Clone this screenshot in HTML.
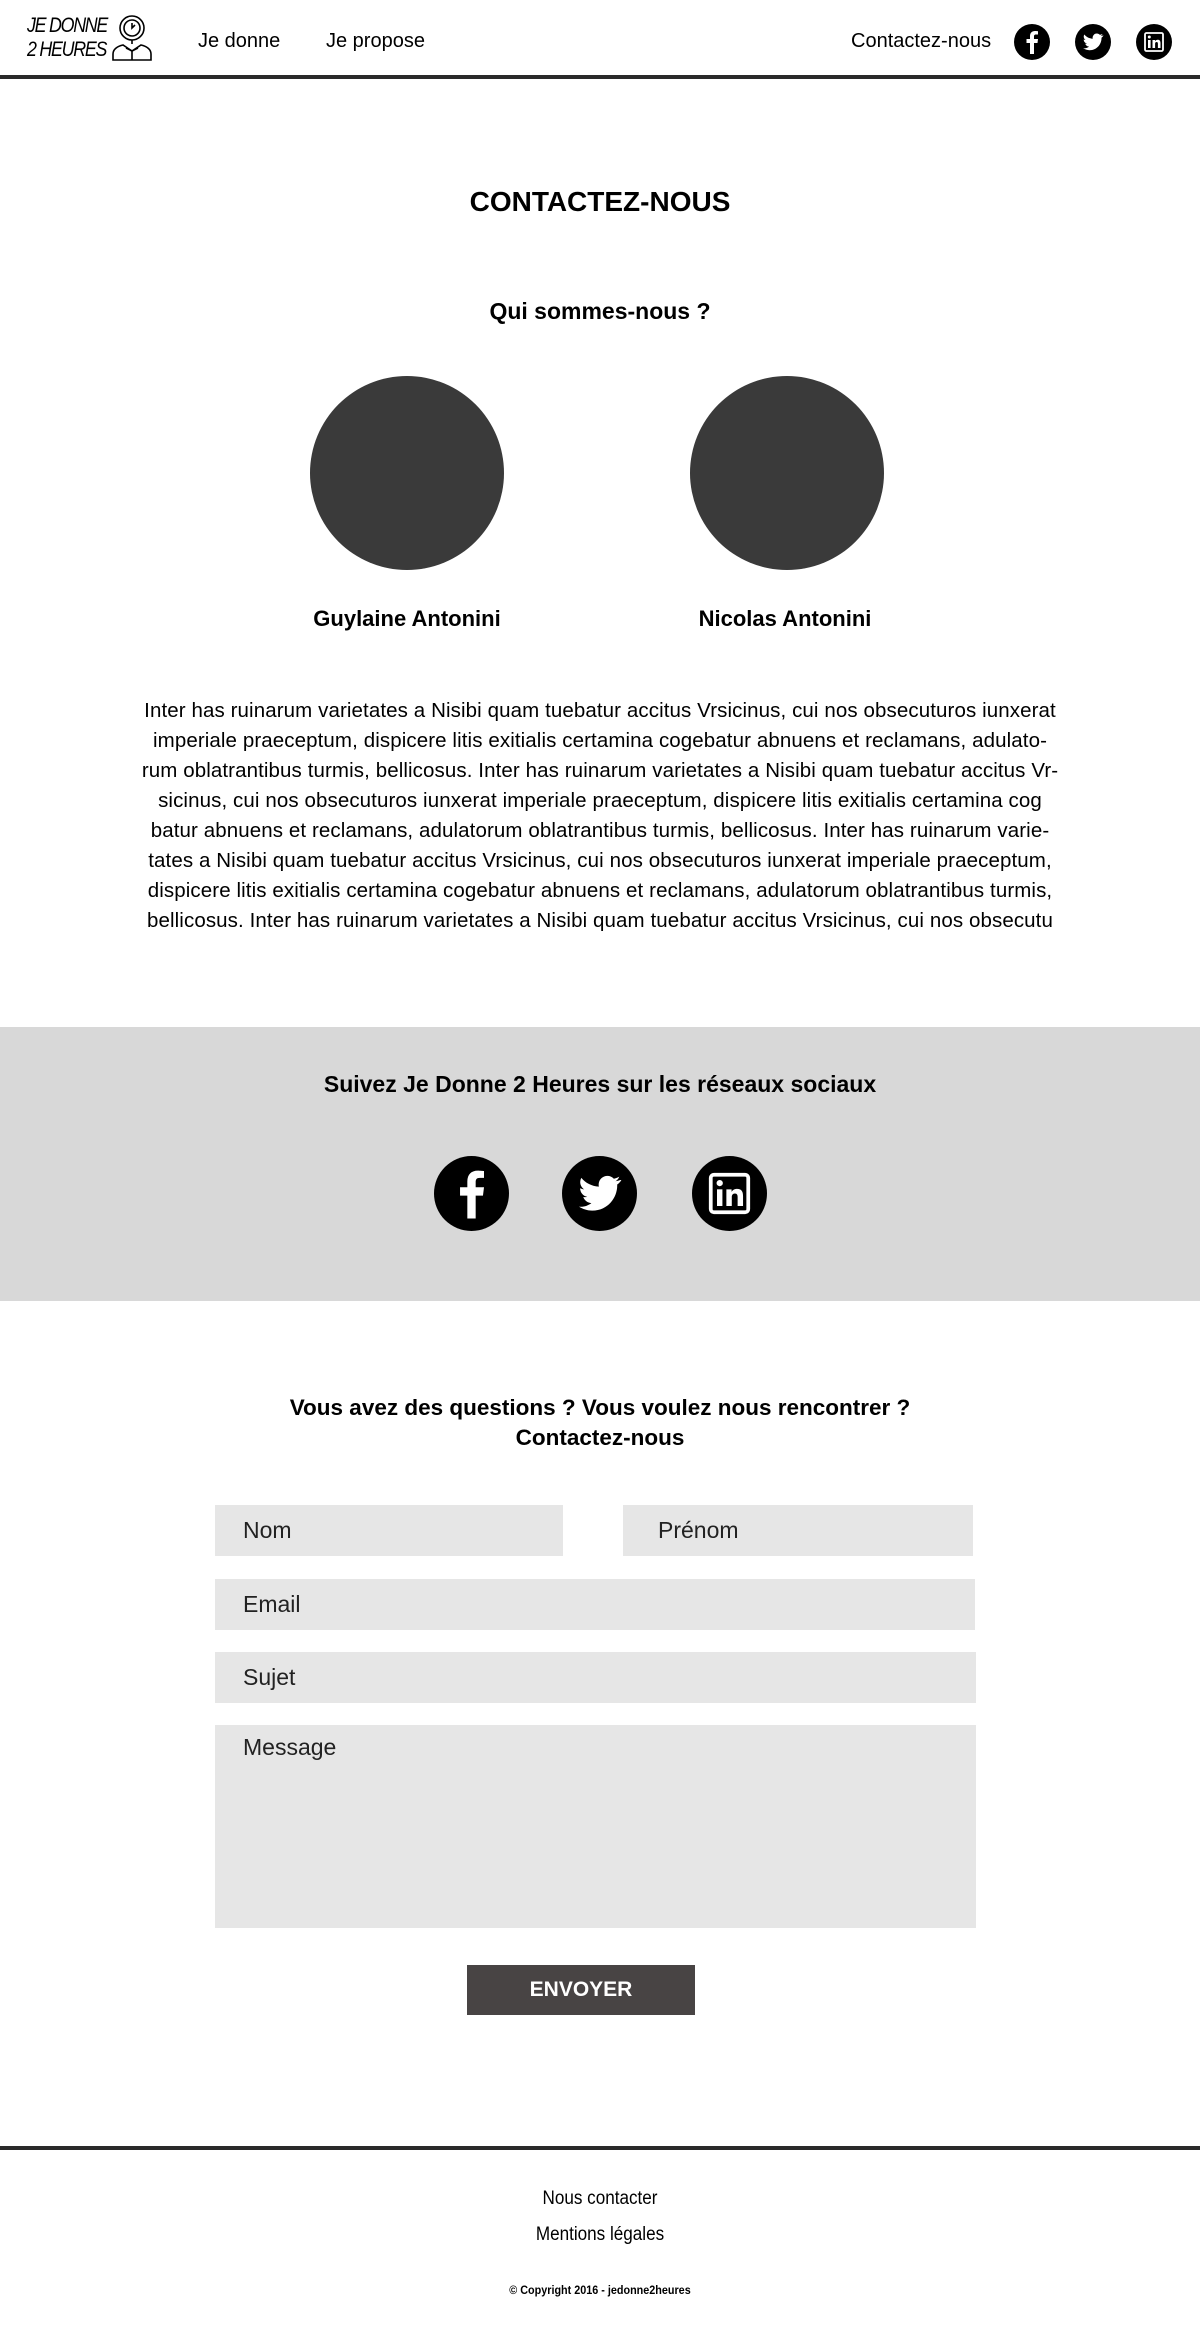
<!DOCTYPE html>
<html><head><meta charset="utf-8"><style>
*{margin:0;padding:0;box-sizing:border-box}
body{width:1200px;height:2336px;position:relative;background:#fff;font-family:"Liberation Sans",sans-serif;color:#000;overflow:hidden}
.a{position:absolute}
.c{position:absolute;left:0;width:1200px;text-align:center}
.nav{font-size:20px;top:30px}
.circ{position:absolute;width:194px;height:194px;border-radius:50%;background:#3a3a3a;top:376px}
.inp{position:absolute;background:#e6e6e6;font-size:23px;color:#222;padding-left:28px;line-height:51px}
.p{font-size:20.5px;letter-spacing:0.1px;line-height:30px}
</style></head><body>
<div class="a" style="left:27px;top:14px;font-size:21px;line-height:24px;font-style:italic;letter-spacing:-1.5px;transform:scaleX(0.85);transform-origin:left">JE DONNE<br>2 HEURES</div>
<svg class="a" style="left:110px;top:14px" width="44" height="48" viewBox="0 0 44 48" fill="none" stroke="#000" stroke-width="1.6">
<circle cx="22" cy="14" r="12"/><circle cx="22" cy="14" r="8"/><path d="M22 9v5l3-3"/><path d="M22 26v4"/>
<path d="M3 46v-6c0-5 5-8 10-9l9 6 9-6c5 1 10 4 10 9v6z"/><path d="M22 37v9M16 34l6 3 6-3"/></svg>
<div class="a nav" style="left:198px">Je donne</div>
<div class="a nav" style="left:326px">Je propose</div>
<div class="a nav" style="left:851px">Contactez-nous</div>
<svg class="a" style="left:1014px;top:24px" width="36" height="36" viewBox="0 0 36 36"><circle cx="18" cy="18" r="18"/><path d="M20 30V19h3.5l.5-4h-4v-2.5c0-1.2.4-2 2-2h2V7.2c-.4 0-1.6-.2-3-.2-3 0-5 1.8-5 5.2V15h-3.5v4H16v11z" fill="#fff"/></svg>
<svg class="a" style="left:1075px;top:24px" width="36" height="36" viewBox="0 0 36 36"><circle cx="18" cy="18" r="18"/><path d="M28 11.5c-.7.3-1.5.5-2.3.6.8-.5 1.5-1.3 1.8-2.2-.8.5-1.7.8-2.6 1-1.6-1.7-4.3-1.8-6-.2-1.1 1-1.5 2.6-1.2 4C14.3 14.5 11.3 13 9.3 10.5c-1.1 1.9-.5 4.3 1.3 5.5-.6 0-1.3-.2-1.9-.5 0 2 1.4 3.7 3.4 4.1-.6.2-1.3.2-1.9.1.6 1.7 2.1 2.8 3.9 2.9-1.7 1.3-3.9 2-6 1.7 1.9 1.2 4.1 1.9 6.4 1.9 7.7 0 12-6.4 12-12v-.5c.8-.6 1.5-1.3 2-2.2z" fill="#fff"/></svg>
<svg class="a" style="left:1136px;top:24px" width="36" height="36" viewBox="0 0 36 36"><circle cx="18" cy="18" r="18"/><rect x="9" y="9" width="18" height="18" rx="1.5" fill="none" stroke="#fff" stroke-width="1.8"/><rect x="12" y="16" width="2.6" height="8" fill="#fff"/><circle cx="13.3" cy="13" r="1.5" fill="#fff"/><path d="M16.5 16h2.5v1.2c.6-1 1.6-1.4 2.7-1.4 2 0 2.8 1.2 2.8 3.4V24h-2.6v-4.3c0-1-.3-1.7-1.3-1.7s-1.5.7-1.5 1.7V24h-2.6z" fill="#fff"/></svg>
<div class="a" style="left:0;top:75px;width:1200px;height:4px;background:#2a2a2a"></div>

<div class="c" style="top:186px;font-size:28px;font-weight:bold">CONTACTEZ-NOUS</div>
<div class="c" style="top:298px;font-size:23px;font-weight:bold">Qui sommes-nous ?</div>
<div class="circ" style="left:310px"></div>
<div class="circ" style="left:690px"></div>
<div class="a" style="left:257px;width:300px;text-align:center;top:606px;font-size:22px;font-weight:bold">Guylaine Antonini</div>
<div class="a" style="left:635px;width:300px;text-align:center;top:606px;font-size:22px;font-weight:bold">Nicolas Antonini</div>
<div class="c p" style="top:696px;white-space:nowrap">Inter has ruinarum varietates a Nisibi quam tuebatur accitus Vrsicinus, cui nos obsecuturos iunxerat<br>imperiale praeceptum, dispicere litis exitialis certamina cogebatur abnuens et reclamans, adulato-<br>rum oblatrantibus turmis, bellicosus. Inter has ruinarum varietates a Nisibi quam tuebatur accitus Vr-<br>sicinus, cui nos obsecuturos iunxerat imperiale praeceptum, dispicere litis exitialis certamina cog<br>batur abnuens et reclamans, adulatorum oblatrantibus turmis, bellicosus. Inter has ruinarum varie-<br>tates a Nisibi quam tuebatur accitus Vrsicinus, cui nos obsecuturos iunxerat imperiale praeceptum,<br>dispicere litis exitialis certamina cogebatur abnuens et reclamans, adulatorum oblatrantibus turmis,<br>bellicosus. Inter has ruinarum varietates a Nisibi quam tuebatur accitus Vrsicinus, cui nos obsecutu</div>

<div class="a" style="left:0;top:1027px;width:1200px;height:274px;background:#d8d8d8"></div>
<div class="c" style="top:1071px;font-size:23px;font-weight:bold">Suivez Je Donne 2 Heures sur les réseaux sociaux</div>
<svg class="a" style="left:434px;top:1156px" width="75" height="75" viewBox="0 0 36 36"><circle cx="18" cy="18" r="18"/><path d="M20 30V19h3.5l.5-4h-4v-2.5c0-1.2.4-2 2-2h2V7.2c-.4 0-1.6-.2-3-.2-3 0-5 1.8-5 5.2V15h-3.5v4H16v11z" fill="#fff"/></svg>
<svg class="a" style="left:562px;top:1156px" width="75" height="75" viewBox="0 0 36 36"><circle cx="18" cy="18" r="18"/><path d="M28 11.5c-.7.3-1.5.5-2.3.6.8-.5 1.5-1.3 1.8-2.2-.8.5-1.7.8-2.6 1-1.6-1.7-4.3-1.8-6-.2-1.1 1-1.5 2.6-1.2 4C14.3 14.5 11.3 13 9.3 10.5c-1.1 1.9-.5 4.3 1.3 5.5-.6 0-1.3-.2-1.9-.5 0 2 1.4 3.7 3.4 4.1-.6.2-1.3.2-1.9.1.6 1.7 2.1 2.8 3.9 2.9-1.7 1.3-3.9 2-6 1.7 1.9 1.2 4.1 1.9 6.4 1.9 7.7 0 12-6.4 12-12v-.5c.8-.6 1.5-1.3 2-2.2z" fill="#fff"/></svg>
<svg class="a" style="left:692px;top:1156px" width="75" height="75" viewBox="0 0 36 36"><circle cx="18" cy="18" r="18"/><rect x="9" y="9" width="18" height="18" rx="1.5" fill="none" stroke="#fff" stroke-width="1.8"/><rect x="12" y="16" width="2.6" height="8" fill="#fff"/><circle cx="13.3" cy="13" r="1.5" fill="#fff"/><path d="M16.5 16h2.5v1.2c.6-1 1.6-1.4 2.7-1.4 2 0 2.8 1.2 2.8 3.4V24h-2.6v-4.3c0-1-.3-1.7-1.3-1.7s-1.5.7-1.5 1.7V24h-2.6z" fill="#fff"/></svg>

<div class="c" style="top:1393px;font-size:22.5px;font-weight:bold;line-height:30px">Vous avez des questions ? Vous voulez nous rencontrer ?<br>Contactez-nous</div>
<div class="inp" style="left:215px;top:1505px;width:348px;height:51px">Nom</div>
<div class="inp" style="left:623px;top:1505px;width:350px;height:51px;padding-left:35px">Prénom</div>
<div class="inp" style="left:215px;top:1579px;width:760px;height:51px">Email</div>
<div class="inp" style="left:215px;top:1652px;width:761px;height:51px">Sujet</div>
<div class="inp" style="left:215px;top:1725px;width:761px;height:203px;line-height:45px">Message</div>
<div class="a" style="left:467px;top:1965px;width:228px;height:50px;background:#484444;color:#fff;font-size:21px;font-weight:bold;text-align:center;line-height:50px">ENVOYER</div>

<div class="a" style="left:0;top:2146px;width:1200px;height:4px;background:#2a2a2a"></div>
<div class="c" style="top:2188px;font-size:19px;transform:scaleX(0.9)">Nous contacter</div>
<div class="c" style="top:2224px;font-size:19px;transform:scaleX(0.9)">Mentions légales</div>
<div class="c" style="top:2283px;font-size:12px;font-weight:bold;transform:scaleX(0.9)">© Copyright 2016 - jedonne2heures</div>
</body></html>
